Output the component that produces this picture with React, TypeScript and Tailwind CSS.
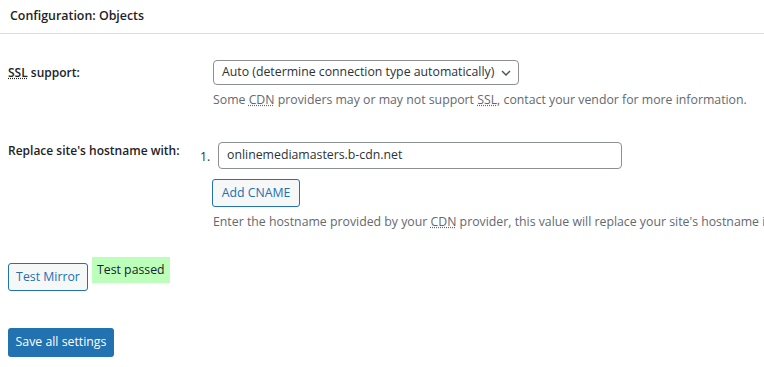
export default function App() {
  return (
    <div className="w-[764px] h-[367px] overflow-hidden bg-white font-['Segoe_UI','Open_Sans',sans-serif] text-[12.3px] text-[#1d2327]">
      {/* Header */}
      <div className="h-[34px] border-b border-[#dcdcde] px-[10px] flex items-center">
        <h3 className="text-[12.4px] font-semibold text-[#1d2327]">Configuration: Objects</h3>
      </div>

      <div className="pl-[8px]">
        {/* SSL support */}
        <div className="mt-[26px] grid grid-cols-[205px_1fr]">
          <div className="h-[25px] flex items-center text-[12px] font-semibold">
            <span>
              <abbr title="Secure Sockets Layer">SSL</abbr> support:
            </span>
          </div>
          <div>
            <div className="w-[306px] h-[25px] border border-[#8c8f94] rounded-[4px] flex items-center justify-between pl-[8px] pr-[7px] text-[#2c3338]">
              <span className="whitespace-nowrap">Auto (determine connection type automatically)</span>
              <svg width="10" height="6" viewBox="0 0 10 6" fill="none">
                <path d="M1 1l4 4 4-4" stroke="#50575e" strokeWidth="1.5" />
              </svg>
            </div>
            <p className="mt-[6px] leading-[18px] text-[#646970] whitespace-nowrap">
              Some <abbr title="Content Delivery Network">CDN</abbr> providers may or may not support{' '}
              <abbr title="Secure Sockets Layer">SSL</abbr>, contact your vendor for more information.
            </p>
          </div>
        </div>

        {/* Hostname */}
        <div className="mt-[33px] grid grid-cols-[205px_1fr]">
          <div className="leading-[18px] text-[12px] font-semibold whitespace-nowrap">Replace site's hostname with:</div>
          <div className="min-w-0">
            <div className="-ml-[13px] flex items-center">
              <span className="w-[18px] pt-[3px] text-[#2c3338]">1.</span>
              <div className="w-[404px] h-[27px] border border-[#8c8f94] rounded-[4px] flex items-center px-[8px] text-[#2c3338]">
                onlinemediamasters.b-cdn.net
              </div>
            </div>
            <button className="mt-[10px] -ml-px w-[88px] h-[28px] border border-[#2271b1] rounded-[3px] bg-[#f6f7f7] text-[#2271b1]">
              Add CNAME
            </button>
            <p className="mt-[6px] leading-[18px] text-[#646970] whitespace-nowrap">
              Enter the hostname provided by your <abbr title="Content Delivery Network">CDN</abbr> provider, this value
              will replace your site's hostname in the <abbr title="Hypertext Markup Language">HTML</abbr>.
            </p>
          </div>
        </div>

        {/* Test */}
        <div className="mt-[26px] flex items-start gap-[4px]">
          <button className="mt-[6px] w-[80px] h-[28px] border border-[#2271b1] rounded-[3px] bg-[#f6f7f7] text-[#2271b1]">
            Test Mirror
          </button>
          <span className="h-[26px] px-[5px] flex items-center bg-[#bbffbb] text-[#1d2327]">Test passed</span>
        </div>

        {/* Save */}
        <button className="mt-[37px] w-[106px] h-[29px] rounded-[3px] bg-[#2271b1] text-white">
          Save all settings
        </button>
      </div>
    </div>
  );
}
